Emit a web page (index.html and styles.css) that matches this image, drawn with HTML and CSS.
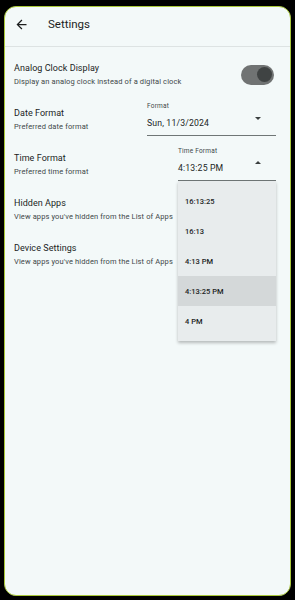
FILE: index.html
```html
<!DOCTYPE html>
<html>
<head>
<meta charset="utf-8">
<link rel="stylesheet" href="styles.css">
</head>
<body>
<div class="screen">
  <header class="appbar">
    <span class="back">
      <svg viewBox="0 0 24 24" width="15" height="15"><path d="M20 11H7.83l5.59-5.59L12 4l-8 8 8 8 1.41-1.41L7.83 13H20v-2z" fill="#1c1f1f"/></svg>
    </span>
    <span class="title">Settings</span>
  </header>
  <div class="divider"></div>
  <main class="list">
    <div class="row">
      <div class="text">
        <div class="t">Analog Clock Display</div>
        <div class="s">Display an analog clock instead of a digital clock</div>
      </div>
      <div class="switch"><div class="thumb"></div></div>
    </div>
    <div class="row">
      <div class="text">
        <div class="t">Date Format</div>
        <div class="s">Preferred date format</div>
      </div>
      <div class="field field-date">
        <div class="label">Format</div>
        <div class="value">Sun, 11/3/2024</div>
        <span class="caret down"></span>
      </div>
    </div>
    <div class="row">
      <div class="text">
        <div class="t">Time Format</div>
        <div class="s">Preferred time format</div>
      </div>
      <div class="field field-time">
        <div class="label">Time Format</div>
        <div class="value">4:13:25 PM</div>
        <span class="caret up"></span>
        <ul class="menu">
          <li>16:13:25</li>
          <li>16:13</li>
          <li>4:13 PM</li>
          <li class="sel">4:13:25 PM</li>
          <li>4 PM</li>
        </ul>
      </div>
    </div>
    <div class="row">
      <div class="text">
        <div class="t">Hidden Apps</div>
        <div class="s">View apps you've hidden from the List of Apps</div>
      </div>
    </div>
    <div class="row">
      <div class="text">
        <div class="t">Device Settings</div>
        <div class="s">View apps you've hidden from the List of Apps</div>
      </div>
    </div>
  </main>
</div>
</body>
</html>
```

FILE: styles.css
```css
* { box-sizing: border-box; }
html, body {
  margin: 0;
  padding: 0;
  background: #000;
  height: 600px;
  overflow: hidden;
}
body {
  padding: 6px 4px 4px 4px;
  font-family: Roboto, "Noto Sans", sans-serif;
  color: #1b1e1e;
}
.screen {
  position: relative;
  height: 590px;
  background: #f3f9f9;
  border: 1px solid #a9c83a;
  border-radius: 12px;
  overflow: hidden;
}
.appbar {
  display: flex;
  align-items: center;
  height: 33px;
  padding-left: 9px;
}
.back {
  display: flex;
  width: 15px;
  height: 15px;
  margin-top: 1px;
}
.title {
  margin-left: 19px;
  font-size: 11.5px;
  color: #1b1e1e;
}
.divider {
  margin-top: 6px;
  height: 1px;
  background: #dde3e3;
}
.list {
  padding-top: 5px;
}
.row {
  position: relative;
  display: flex;
  align-items: center;
  justify-content: space-between;
  height: 45px;
  padding: 0 14px 0 9px;
}
.text .t {
  font-size: 9px;
  line-height: 13px;
  letter-spacing: 0.05px;
  color: #1b1e1e;
}
.text .s {
  font-size: 7.5px;
  line-height: 13px;
  letter-spacing: 0.12px;
  color: #414849;
}
.switch {
  position: relative;
  width: 33px;
  height: 20px;
  margin-right: 2px;
  border-radius: 10px;
  background: #707373;
  display: flex;
  align-items: center;
  justify-content: flex-end;
  padding-right: 2px;
}
.thumb {
  width: 15px;
  height: 15px;
  border-radius: 50%;
  background: #3f4343;
}
.field {
  position: relative;
  align-self: flex-start;
  margin-top: 5px;
  height: 34px;
  border-bottom: 1px solid #6f7676;
}
.field-date { width: 129px; }
.field-time { width: 98px; }
.label {
  font-size: 6.5px;
  line-height: 9px;
  color: #414849;
  letter-spacing: 0.2px;
}
.value {
  margin-top: 5px;
  font-size: 8.7px;
  line-height: 14px;
  letter-spacing: 0.15px;
  color: #1b1e1e;
}
.caret {
  position: absolute;
  right: 15px;
  top: 15px;
  width: 0;
  height: 0;
  border-left: 3px solid transparent;
  border-right: 3px solid transparent;
}
.caret.down { border-top: 3px solid #3a3f3f; }
.caret.up { border-bottom: 3px solid #3a3f3f; top: 14px; }
.menu {
  position: absolute;
  top: 34px;
  left: 0;
  right: 0;
  margin: 0;
  padding: 5px 0;
  list-style: none;
  background: #e8eced;
  box-shadow: 0 2px 3px rgba(0,0,0,0.25);
  z-index: 5;
}
.menu li {
  height: 30px;
  display: flex;
  align-items: center;
  padding-left: 7px;
  font-size: 7.5px;
  font-weight: 500;
  color: #1b1e1e;
}
.menu li.sel { background: #d4d8d9; }
```
